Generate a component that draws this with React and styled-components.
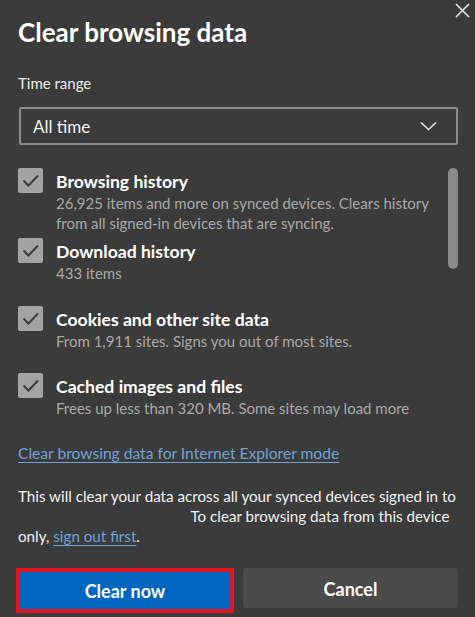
import styled, { createGlobalStyle } from "styled-components"

const GlobalStyle = createGlobalStyle`
  * { box-sizing: border-box; }
  body {
    margin: 0;
    background: #3b3b3b;
    font-family: Lato, "Liberation Sans", sans-serif;
    color: #fff;
  }
`

const items = [
  {
    title: "Browsing history",
    desc: "26,925 items and more on synced devices. Clears history\nfrom all signed-in devices that are syncing.",
    h: 70,
  },
  { title: "Download history", desc: "433 items", h: 68 },
  { title: "Cookies and other site data", desc: "From 1,911 sites. Signs you out of most sites.", h: 67 },
  { title: "Cached images and files", desc: "Frees up less than 320 MB. Some sites may load more", h: 50 },
]

export default function App() {
  return (
    <>
      <GlobalStyle />
      <Dialog>
        <Header>
          <Title>Clear browsing data</Title>
          <CloseButton aria-label="Close">
            <svg width="15" height="15" viewBox="0 0 15 15">
              <path d="M1 1L14 14M14 1L1 14" stroke="#e6e6e6" strokeWidth="1.6" fill="none" />
            </svg>
          </CloseButton>
        </Header>

        <Label>Time range</Label>
        <Select>
          <span>All time</span>
          <svg width="17" height="10" viewBox="0 0 17 10">
            <path d="M1 1.5L8.5 8.5L16 1.5" stroke="#e6e6e6" strokeWidth="1.6" fill="none" />
          </svg>
        </Select>

        <ListArea>
          <ItemList>
            {items.map((it) => (
              <Item key={it.title} $h={it.h}>
                <Checkbox>
                  <svg width="25" height="25" viewBox="0 0 25 25">
                    <path d="M5.5 12.5L10.5 17.5L20 7.5" stroke="#3b3b3b" strokeWidth="2" fill="none" />
                  </svg>
                </Checkbox>
                <ItemText>
                  <ItemTitle>{it.title}</ItemTitle>
                  <ItemDesc>{it.desc}</ItemDesc>
                </ItemText>
              </Item>
            ))}
          </ItemList>
          <ScrollTrack>
            <ScrollThumb />
          </ScrollTrack>
        </ListArea>

        <IELink href="#">Clear browsing data for Internet Explorer mode</IELink>

        <Notice>
          This will clear your data across all your synced devices signed in to
          <br />
          <Redacted /> To clear browsing data from this device
          <br />
          only, <InlineLink href="#">sign out first</InlineLink>.
        </Notice>

        <Buttons>
          <PrimaryButton>Clear now</PrimaryButton>
          <SecondaryButton>Cancel</SecondaryButton>
        </Buttons>
      </Dialog>
    </>
  )
}

const Dialog = styled.div`
  width: 475px;
  height: 617px;
  padding: 0 17px 0 18px;
  display: flex;
  flex-direction: column;
  overflow: hidden;
  background: #3b3b3b;
`

const Header = styled.div`
  display: flex;
  justify-content: space-between;
  align-items: flex-start;
  margin-right: -12px;
`

const Title = styled.h1`
  margin: 16px 0 0;
  font-size: 26px;
  line-height: 32px;
  font-weight: 700;
  color: #fff;
`

const CloseButton = styled.button`
  margin-top: 3px;
  padding: 0;
  border: none;
  background: none;
  display: flex;
`

const Label = styled.div`
  margin-top: 25px;
  font-size: 15px;
  line-height: 20px;
  color: #ececec;
`

const Select = styled.div`
  margin: 14px 0 0 1px;
  height: 38px;
  border: 2px solid #8c8c8c;
  border-radius: 2px;
  padding: 0 19px 0 12px;
  display: flex;
  align-items: center;
  justify-content: space-between;
  font-size: 17px;
  color: #f2f2f2;
`

const ListArea = styled.div`
  margin-top: 23px;
  height: 252px;
  display: flex;
  gap: 8px;
`

const ItemList = styled.div`
  flex: 1;
  display: flex;
  flex-direction: column;
`

const Item = styled.div`
  height: ${(p) => p.$h}px;
  flex-shrink: 0;
  display: flex;
  gap: 13px;
`

const Checkbox = styled.div`
  width: 25px;
  height: 25px;
  flex-shrink: 0;
  border-radius: 2px;
  background: #a3a3a3;
  display: flex;
`

const ItemText = styled.div`
  padding-top: 3px;
  display: flex;
  flex-direction: column;
`

const ItemTitle = styled.div`
  font-size: 17.6px;
  line-height: 22px;
  font-weight: 700;
  color: #fff;
`

const ItemDesc = styled.div`
  font-size: 15px;
  line-height: 20px;
  color: #a8a8a8;
  white-space: pre-line;
`

const ScrollTrack = styled.div`
  width: 10px;
  flex-shrink: 0;
`

const ScrollThumb = styled.div`
  width: 10px;
  height: 101px;
  border-radius: 5px;
  background: #8a8a8a;
`

const IELink = styled.a`
  margin-top: 23px;
  align-self: flex-start;
  font-size: 15.6px;
  line-height: 20px;
  color: #6fa3d6;
  text-decoration: underline;
  text-underline-offset: 3px;
`

const Notice = styled.p`
  margin: 23px 0 0;
  font-size: 15.2px;
  line-height: 20px;
  color: #f2f2f2;
  white-space: nowrap;
`

const Redacted = styled.span`
  display: inline-block;
  width: 169px;
`

const InlineLink = styled.a`
  color: #6fa3d6;
  text-decoration: underline;
  text-underline-offset: 3px;
`

const Buttons = styled.div`
  margin: 22px 0 0 -2px;
  display: flex;
  align-items: flex-start;
  gap: 9px;
`

const PrimaryButton = styled.button`
  width: 218px;
  height: 45px;
  border: 4px solid #e3141f;
  background: #0066c0;
  color: #fff;
  font-family: inherit;
  font-size: 18px;
  font-weight: 700;
`

const SecondaryButton = styled.button`
  flex: 1;
  height: 40px;
  padding-top: 3px;
  border: none;
  border-radius: 3px;
  background: #4a4a4a;
  color: #fff;
  font-family: inherit;
  font-size: 18px;
  font-weight: 700;
`
